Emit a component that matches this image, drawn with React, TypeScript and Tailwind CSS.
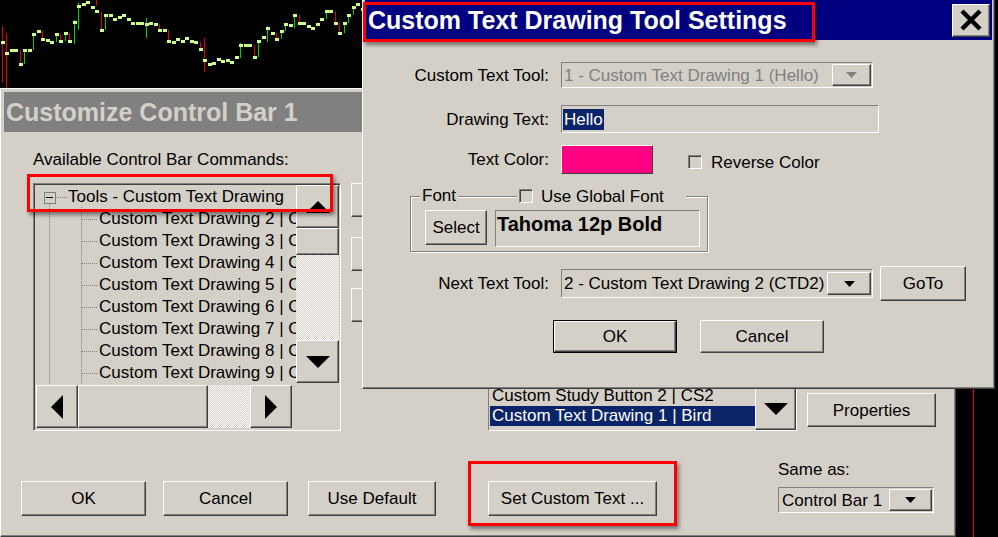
import React from "react";

const RAISED =
  "bg-[#d4d0c8] border border-t-white border-l-white border-r-[#404040] border-b-[#404040] shadow-[inset_-1px_-1px_0_#808080]";
const SUNKEN = "border border-t-[#808080] border-l-[#808080] border-r-white border-b-white";
const SUNKEN2 =
  "border border-t-[#808080] border-l-[#808080] border-r-white border-b-white shadow-[inset_1px_1px_0_#404040]";
const CHECKER =
  "bg-[image:repeating-conic-gradient(#ffffff_0%_25%,#d4d0c8_0%_50%)] bg-[length:2px_2px]";

type Dir = "up" | "down" | "left" | "right";

function Tri({ dir, w, h, color = "#000" }: { dir: Dir; w: number; h: number; color?: string }) {
  let pts = "";
  if (dir === "up") pts = `0,${h} ${w},${h} ${w / 2},0`;
  if (dir === "down") pts = `0,0 ${w},0 ${w / 2},${h}`;
  if (dir === "left") pts = `${w},0 ${w},${h} 0,${h / 2}`;
  if (dir === "right") pts = `0,0 ${w},${h / 2} 0,${h}`;
  return (
    <svg width={w} height={h} className="block">
      <polygon points={pts} fill={color} />
    </svg>
  );
}

function Btn({ className = "", children }: { className?: string; children?: React.ReactNode }) {
  return (
    <div className={`${RAISED} flex items-center justify-center shrink-0 whitespace-nowrap ${className}`}>
      {children}
    </div>
  );
}

function Chart() {
  const closes = [
    42, 53, 50, 50, 64, 50, 50, 34, 31, 39, 40, 42, 34, 41, 33, 41, 22, 6, 4, 2, 7, 11, 30, 15, 15, 19, 17,
    15, 19, 23, 23, 23, 24, 23, 24, 30, 30, 41, 42, 39, 41, 38, 41, 42, 49, 60, 64, 63, 59, 61, 60, 62, 57,
    45, 45, 45, 57, 41, 37, 28, 33, 39, 31, 24, 25, 15, 23, 23, 26, 28, 24, 19, 11, 11, 23, 33, 23, 15, 7,
    4, 9,
  ];
  const extra: Record<number, [number, number, string]> = {
    0: [26, 82, "#e00000"],
    1: [33, 89, "#e00000"],
    16: [20, 44, "#00d000"],
    17: [3, 30, "#00d000"],
    21: [0, 6, "#e00000"],
    22: [12, 32, "#e00000"],
    32: [18, 38, "#00d000"],
    45: [38, 72, "#e00000"],
    53: [43, 58, "#00d000"],
    59: [26, 42, "#00d000"],
    65: [14, 28, "#00d000"],
    80: [2, 25, "#00d000"],
  };
  return (
    <svg className="absolute left-0 top-0" width={370} height={88} shapeRendering="crispEdges">
      {closes.map((y, i) => {
        const x = Math.round(1.5 + 4.5 * i);
        const prev = i > 0 ? closes[i - 1] : y;
        const ex = extra[i];
        let line: React.ReactNode = null;
        if (ex) {
          line = <rect x={x} y={ex[0]} width={1} height={ex[1] - ex[0]} fill={ex[2]} />;
        } else if (Math.abs(y - prev) > 5) {
          const top = Math.min(y, prev);
          const bot = Math.max(y, prev);
          line = <rect x={x} y={top} width={1} height={bot - top} fill={y < prev ? "#00d000" : "#e00000"} />;
        }
        return (
          <g key={i}>
            {line}
            <rect x={x - 1} y={y - 1} width={4} height={3} fill="#ccff88" />
          </g>
        );
      })}
    </svg>
  );
}

function Tree() {
  const items = [2, 3, 4, 5, 6, 7, 8, 9];
  return (
    <div className={`${SUNKEN2} w-[308px] h-[248px] p-px shrink-0`}>
      <div className="grid h-full grid-cols-[1fr_43px] grid-rows-[1fr_44px]">
        <div className="relative overflow-hidden">
          <svg className="absolute left-0 top-0" width={262} height={201} shapeRendering="crispEdges">
            <rect x={9} y={7} width={11} height={11} fill="#d4d0c8" stroke="#808080" />
            <rect x={11} y={12} width={7} height={1} fill="#000" />
            <line x1={21} y1={12.5} x2={32} y2={12.5} stroke="#808080" strokeDasharray="1 1" />
            <line x1={14.5} y1={19} x2={14.5} y2={199} stroke="#808080" strokeDasharray="1 1" />
            <line x1={46.5} y1={22} x2={46.5} y2={199} stroke="#808080" strokeDasharray="1 1" />
            {items.map((n, k) => (
              <line
                key={n}
                x1={47}
                y1={34.5 + k * 22}
                x2={62}
                y2={34.5 + k * 22}
                stroke="#808080"
                strokeDasharray="1 1"
              />
            ))}
          </svg>
          <div className="relative pt-px">
            <div className="h-[22px] leading-[22px] pl-[33px] whitespace-nowrap">Tools - Custom Text Drawing</div>
            {items.map((n) => (
              <div key={n} className="h-[22px] leading-[22px] pl-[64px] whitespace-nowrap">
                Custom Text Drawing {n} | CTD{n}
              </div>
            ))}
          </div>
        </div>
        <div className="flex flex-col pb-[2px]">
          <Btn className="h-[43px]">
            <Tri dir="up" w={24} h={12} />
          </Btn>
          <Btn className="h-[27px]" />
          <div className={`flex-1 ${CHECKER}`} />
          <Btn className="h-[43px]">
            <Tri dir="down" w={24} h={12} />
          </Btn>
        </div>
        <div className="flex pl-px pr-[4px] pb-px">
          <Btn className="w-[42px]">
            <Tri dir="left" w={12} h={24} />
          </Btn>
          <Btn className="w-[130px]" />
          <div className={`flex-1 ${CHECKER}`} />
          <Btn className="w-[42px]">
            <Tri dir="right" w={12} h={24} />
          </Btn>
        </div>
        <div />
      </div>
    </div>
  );
}

function BackDialog() {
  return (
    <div
      className={`absolute left-0 top-[88px] w-[956px] h-[449px] bg-[#d4d0c8] border border-t-white border-l-white border-r-[#404040] border-b-[#404040] shadow-[inset_-1px_-1px_0_#808080] p-[3px] flex flex-col`}
    >
      <div className="h-[40px] shrink-0 bg-[#808080] flex items-center pl-[2px]">
        <span className="text-[#d4d0c8] font-bold text-[25px] leading-none whitespace-nowrap">
          Customize Control Bar 1
        </span>
      </div>
      <div className="flex flex-col pl-[17px]">
        <div className="ml-[12px] mt-[19px] h-[18px] leading-[18px] whitespace-nowrap">
          Available Control Bar Commands:
        </div>
        <div className="ml-[12px] mt-[14px] flex h-[248px]">
          <Tree />
          <div className="ml-[10px] w-[590px] flex flex-col justify-between">
            <div className="flex flex-col">
              <Btn className="w-[120px] h-[34px]" />
              <Btn className="w-[120px] h-[34px] mt-[20px]" />
              <Btn className="w-[120px] h-[34px] mt-[17px]" />
            </div>
            <div className="flex items-end">
              <div className={`${SUNKEN} ml-[137px] w-[309px] h-[100px] flex`}>
                <div className="flex-1 flex flex-col justify-end pb-[4px] pl-px overflow-hidden">
                  <div className="h-[20px] leading-[20px] pl-[2px] whitespace-nowrap">
                    Custom Study Button 2 | CS2
                  </div>
                  <div className="h-[20px] leading-[20px] pl-[2px] whitespace-nowrap bg-[#0a246a] text-white">
                    Custom Text Drawing 1 | Bird
                  </div>
                </div>
                <div className="w-[41px] flex flex-col justify-end">
                  <Btn className="h-[42px]">
                    <Tri dir="down" w={24} h={12} />
                  </Btn>
                </div>
              </div>
              <Btn className="ml-[10px] w-[129px] h-[34px] mb-[4px]">Properties</Btn>
            </div>
          </div>
        </div>
        <div className="mt-[30px] flex items-end">
          <Btn className="w-[125px] h-[35px]">OK</Btn>
          <Btn className="ml-[17px] w-[125px] h-[35px]">Cancel</Btn>
          <Btn className="ml-[20px] w-[128px] h-[35px]">Use Default</Btn>
          <Btn className="ml-[52px] w-[169px] h-[35px]">Set Custom Text ...</Btn>
          <div className="ml-[121px] w-[156px] flex flex-col mb-[3px]">
            <div className="h-[18px] leading-[18px] whitespace-nowrap">Same as:</div>
            <div className={`${SUNKEN} mt-[8px] h-[26px] flex items-center`}>
              <span className="flex-1 pl-[3px] whitespace-nowrap">Control Bar 1</span>
              <Btn className="w-[43px] h-[22px] mr-px">
                <Tri dir="down" w={11} h={6} />
              </Btn>
            </div>
          </div>
        </div>
      </div>
    </div>
  );
}

function Check() {
  return <div className={`${SUNKEN2} w-[14px] h-[14px] bg-[#d4d0c8] shrink-0`} />;
}

function TopDialog() {
  return (
    <div className="absolute left-[362px] top-[-3px] w-[633px] h-[392px] bg-[#d4d0c8] border border-t-white border-l-white border-r-[#404040] border-b-[#404040] shadow-[inset_-1px_-1px_0_#808080] p-[2px] flex flex-col">
      <div className="h-[40px] shrink-0 bg-[#000080] flex items-center justify-between pl-[3px] pr-[2px]">
        <span className="text-white font-bold text-[25px] leading-none whitespace-nowrap">
          Custom Text Drawing Tool Settings
        </span>
        <Btn className="w-[38px] h-[33px]">
          <svg width={22} height={22} className="block">
            <path d="M2 2 L20 20 M20 2 L2 20" stroke="#000" strokeWidth={4.5} />
          </svg>
        </Btn>
      </div>

      <div className="flex flex-col">
        <div className="mt-[22px] h-[26px] flex items-center">
          <div className="w-[184px] text-right whitespace-nowrap">Custom Text Tool:</div>
          <div className={`${SUNKEN} ml-[12px] w-[312px] h-[26px] flex items-center`}>
            <span className="flex-1 pl-[2px] text-[#808080] whitespace-nowrap overflow-hidden">
              1 - Custom Text Drawing 1 (Hello)
            </span>
            <Btn className="w-[39px] h-[22px] mr-px">
              <Tri dir="down" w={11} h={6} color="#808080" />
            </Btn>
          </div>
        </div>

        <div className="mt-[17px] h-[28px] flex items-center">
          <div className="w-[184px] text-right whitespace-nowrap">Drawing Text:</div>
          <div className={`${SUNKEN} ml-[12px] w-[318px] h-[28px] flex items-center pl-px`}>
            <span className="bg-[#0a246a] text-white leading-[21px] px-px">Hello</span>
          </div>
        </div>

        <div className="mt-[12px] h-[29px] flex items-center">
          <div className="w-[184px] text-right whitespace-nowrap">Text Color:</div>
          <div className="ml-[12px] w-[92px] h-[29px] bg-[#ff0080] border border-t-white border-l-white border-r-[#404040] border-b-[#404040]" />
          <div className="ml-[35px] mt-[5px] flex items-center">
            <Check />
            <span className="ml-[9px] whitespace-nowrap">Reverse Color</span>
          </div>
        </div>

        <div className="relative mt-[22px] ml-[45px] w-[298px] h-[56px] border border-[#808080] shadow-[1px_1px_0_#ffffff,inset_1px_1px_0_#ffffff] flex pt-[13px] pl-[14px]">
          <div className="absolute left-[9px] top-[-11px] px-[2px] bg-[#d4d0c8] leading-[20px]">Font</div>
          <div className="absolute left-[106px] top-[-9px] h-[16px] pl-[2px] pr-[22px] bg-[#d4d0c8] flex items-center">
            <Check />
            <span className="ml-[8px] whitespace-nowrap">Use Global Font</span>
          </div>
          <Btn className="w-[62px] h-[35px]">Select</Btn>
          <div className={`${SUNKEN} ml-[8px] w-[205px] h-[37px] pl-px pt-[2px]`}>
            <span className="font-bold text-[20px] leading-[22px] whitespace-nowrap">Tahoma 12p Bold</span>
          </div>
        </div>

        <div className="mt-[14px] h-[35px] flex items-center">
          <div className="w-[184px] text-right whitespace-nowrap">Next Text Tool:</div>
          <div className={`${SUNKEN} ml-[12px] w-[312px] h-[29px] flex items-center`}>
            <span className="flex-1 pl-[2px] whitespace-nowrap overflow-hidden">
              2 - Custom Text Drawing 2 (CTD2)
            </span>
            <Btn className="w-[44px] h-[23px] mr-px">
              <Tri dir="down" w={11} h={6} />
            </Btn>
          </div>
          <Btn className="ml-[7px] w-[86px] h-[35px]">GoTo</Btn>
        </div>

        <div className="mt-[19px] h-[33px] flex">
          <div className="ml-[188px] w-[124px] h-[33px] border border-black flex">
            <Btn className="flex-1">OK</Btn>
          </div>
          <Btn className="ml-[23px] w-[124px] h-[33px]">Cancel</Btn>
        </div>
      </div>
    </div>
  );
}

export default function App() {
  return (
    <div className="relative w-[998px] h-[537px] overflow-hidden bg-black font-['Liberation_Sans',Arial,sans-serif] text-[17px] leading-none text-black select-none">
      <Chart />
      <div className="absolute left-[973px] top-[388px] h-[149px] w-px bg-[#ff0000]" />
      <BackDialog />
      <TopDialog />
      <div className="absolute left-[27px] top-[174px] w-[306px] h-[38px] border-[3px] border-[#ff0000] shadow-[2px_3px_4px_rgba(0,0,0,0.45)]" />
      <div className="absolute left-[468px] top-[461px] w-[209px] h-[65px] border-[3px] border-[#ff0000] shadow-[2px_3px_4px_rgba(0,0,0,0.45)]" />
      <div className="absolute left-[363px] top-[2px] w-[452px] h-[40px] border-[3px] border-[#ff0000] shadow-[2px_3px_4px_rgba(0,0,0,0.45)]" />
    </div>
  );
}
